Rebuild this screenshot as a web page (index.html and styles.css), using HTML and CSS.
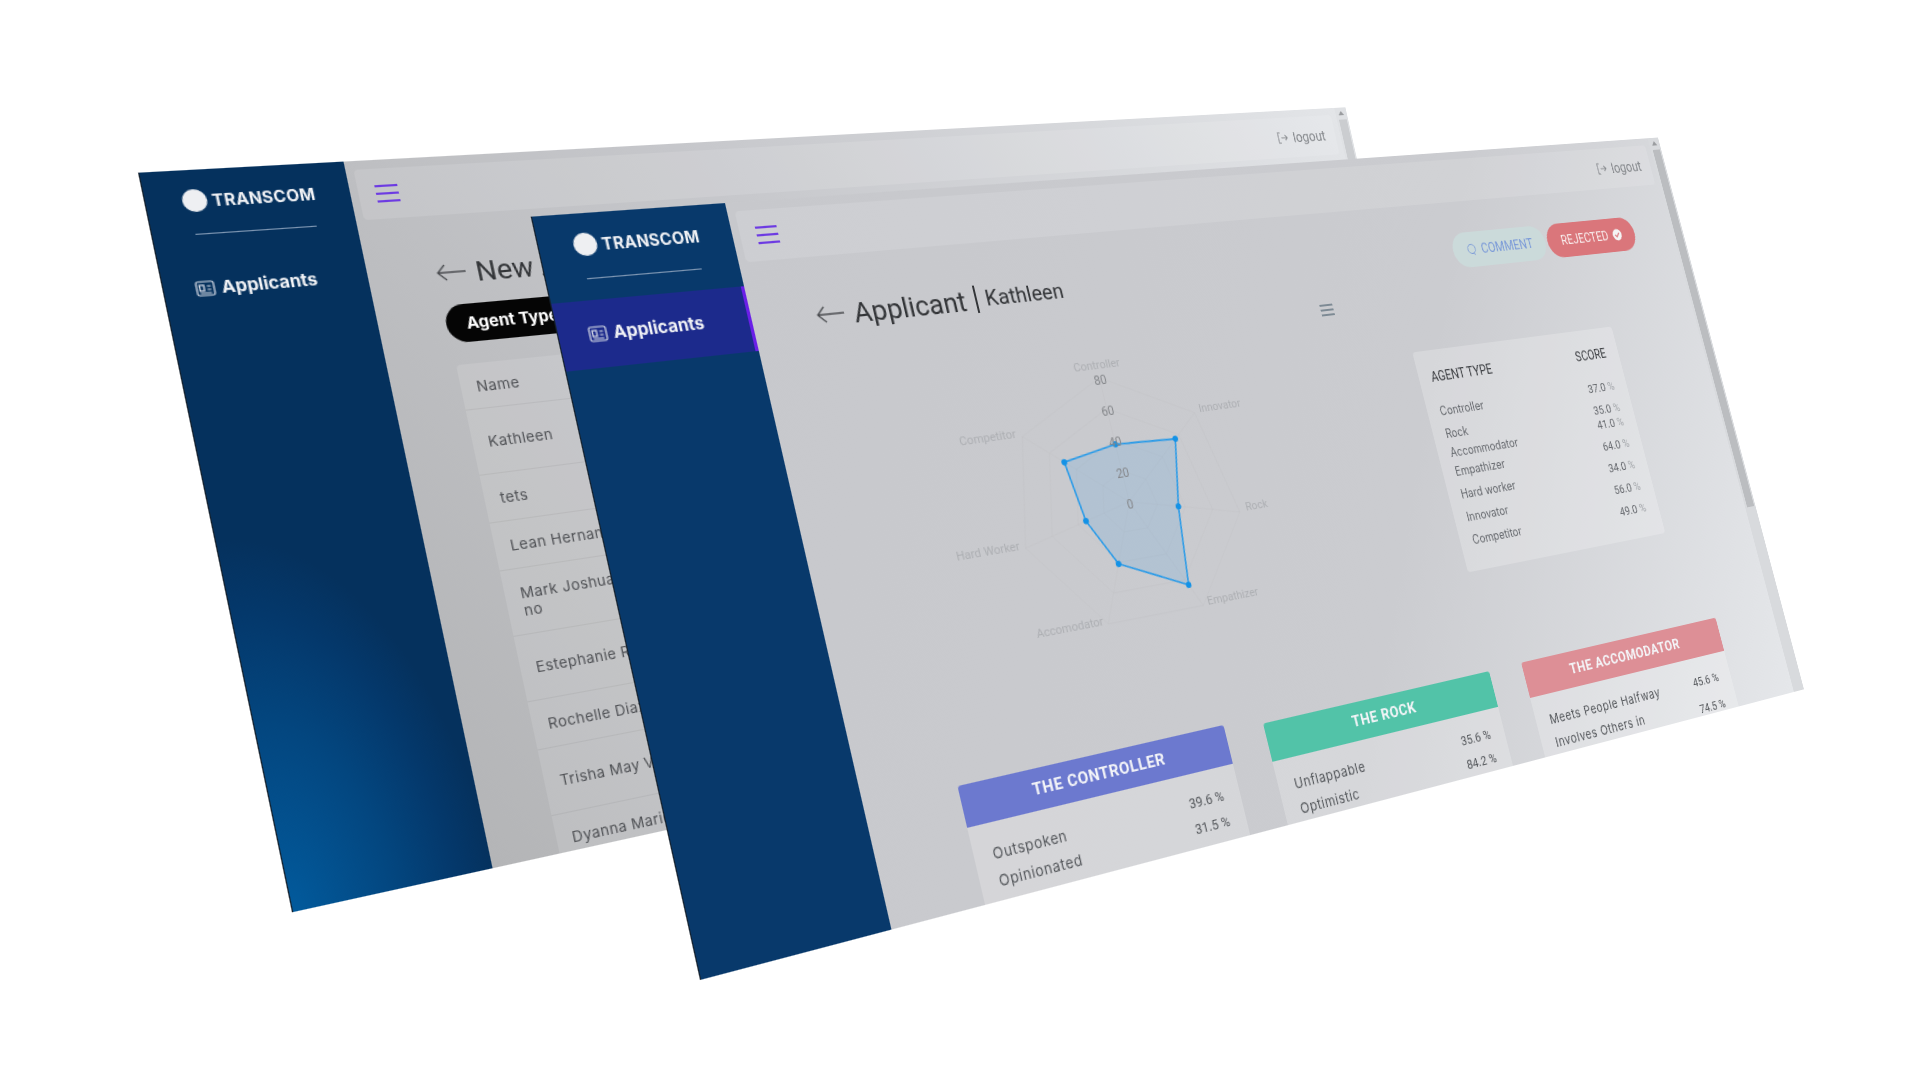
FILE: index.html
```html
<!DOCTYPE html>
<html>
<head>
    <title>Transcom Applicants</title>
    <link rel="stylesheet" href="styles.css">
</head>
<body>
    <!-- back window: applicant list -->
    <div class="window window-back">
        <aside class="sidebar sidebar-back">
            <div class="brand"><span class="brand-dot"></span><span>TRANSCOM</span></div>
            <div class="brand-line"></div>
            <a class="nav-item">
                <svg class="nav-icon" viewBox="0 0 16 14"><rect x="1" y="1" width="14" height="12" rx="1.5"/><rect x="3.5" y="4" width="3.5" height="5"/><path d="M9.5 5h3M9.5 8h3M3.5 11h9"/></svg>
                <span>Applicants</span>
            </a>
        </aside>
        <main class="main main-back">
            <div class="topbar">
                <div class="burger"><i></i><i></i><i></i></div>
                <div class="logout">
                    <svg viewBox="0 0 16 14"><path d="M5 1H2v12h3M6 7h8M11 4l3 3-3 3"/></svg>
                    <span>logout</span>
                </div>
            </div>
            <div class="page-head">
                <svg class="back-arrow" viewBox="0 0 28 16"><path d="M27 8H2M9 1 2 8l7 7"/></svg>
                <h1>New Applicants</h1>
            </div>
            <div class="pill">Agent Type</div>
            <div class="name-list">
                <div class="name-row name-head">Name</div>
                <div class="name-row tall">Kathleen</div>
                <div class="name-row">tets</div>
                <div class="name-row">Lean Hernandez</div>
                <div class="name-row tall">Mark Joshua Maria<br>no</div>
                <div class="name-row tall">Estephanie Reyes</div>
                <div class="name-row">Rochelle Diaz</div>
                <div class="name-row tall">Trisha May V.</div>
                <div class="name-row">Dyanna Marie</div>
            </div>
        </main>
        <div class="scrollbar"><b></b><i></i></div>
    </div>

    <!-- front window: applicant detail -->
    <div class="window window-front">
        <aside class="sidebar">
            <div class="brand"><span class="brand-dot"></span><span>TRANSCOM</span></div>
            <div class="brand-line"></div>
            <a class="nav-item active">
                <svg class="nav-icon" viewBox="0 0 16 14"><rect x="1" y="1" width="14" height="12" rx="1.5"/><rect x="3.5" y="4" width="3.5" height="5"/><path d="M9.5 5h3M9.5 8h3M3.5 11h9"/></svg>
                <span>Applicants</span>
            </a>
        </aside>
        <main class="main main-front">
            <div class="topbar">
                <div class="burger"><i></i><i></i><i></i></div>
                <div class="logout">
                    <svg viewBox="0 0 16 14"><path d="M5 1H2v12h3M6 7h8M11 4l3 3-3 3"/></svg>
                    <span>logout</span>
                </div>
            </div>
            <div class="page-head">
                <svg class="back-arrow" viewBox="0 0 28 16"><path d="M27 8H2M9 1 2 8l7 7"/></svg>
                <h1>Applicant</h1>
                <span class="title-sep"></span>
                <span class="title-name">Kathleen</span>
                <div class="actions">
                    <button class="btn btn-comment">
                        <svg viewBox="0 0 14 14"><circle cx="7" cy="6.5" r="5"/><path d="M8 11l3 2"/></svg>
                        COMMENT
                    </button>
                    <button class="btn btn-rejected">
                        REJECTED
                        <svg viewBox="0 0 14 14"><circle class="tick-bg" cx="7" cy="7" r="6.5"/><path class="tick" d="M4 7l2.2 2.2L10 5"/></svg>
                    </button>
                </div>
            </div>
            <div class="insight">
                <div class="chart">
                    <div class="chart-menu"><i></i><i></i><i></i></div>
                    <svg class="radar" viewBox="0 0 528 306">
                        <g transform="translate(3.5 -2.5)">
                            <g class="radar-grid">
                                <polygon points="232,62 325.8,107.2 349,208.7 284.1,290.1 179.9,290.1 115,208.7 138.2,107.2"/>
                                <polygon points="232,92 302.4,125.9 319.7,202 271,263.1 193,263.1 144.3,202 161.6,125.9"/>
                                <polygon points="232,122 278.9,144.6 290.5,195.4 258,236.1 206,236.1 173.5,195.4 185.1,144.6"/>
                                <polygon points="232,152 255.5,163.3 261.2,188.7 245,209 219,209 202.8,188.7 208.5,163.3"/>
                                <path d="M232 182V62M232 182 325.8 107.2M232 182 349 208.7M232 182 284.1 290.1M232 182 179.9 290.1M232 182 115 208.7M232 182 138.2 107.2"/>
                            </g>
                            <polygon class="radar-area" points="232,126.5 297.7,129.6 283.2,193.7 273.7,268.5 205.3,237.4 182.3,193.3 174.5,136.2"/>
                            <g class="radar-dots">
                                <circle cx="232" cy="126.5" r="3"/><circle cx="297.7" cy="129.6" r="3"/><circle cx="283.2" cy="193.7" r="3"/><circle cx="273.7" cy="268.5" r="3"/><circle cx="205.3" cy="237.4" r="3"/><circle cx="182.3" cy="193.3" r="3"/><circle cx="174.5" cy="136.2" r="3"/>
                            </g>
                        </g>
                        <g class="radar-scale">
                            <text x="236" y="66">80</text><text x="236" y="96">60</text><text x="236" y="126">40</text><text x="236" y="156">20</text><text x="236" y="186">0</text>
                        </g>
                        <g class="radar-labels">
                            <text x="236" y="51">Controller</text>
                            <text x="359" y="105">Innovator</text>
                            <text x="373" y="206">Rock</text>
                            <text x="322" y="288">Empathizer</text>
                            <text x="144" y="288">Accomodator</text>
                            <text x="81" y="207">Hard Worker</text>
                            <text x="107" y="105">Competitor</text>
                        </g>
                    </svg>
                </div>
                <div class="score-card">
                    <div class="score-head"><span>AGENT TYPE</span><span>SCORE</span></div>
                    <div class="score-row"><span>Controller</span><span>37.0 <em>%</em></span></div>
                    <div class="score-row"><span>Rock</span><span>35.0 <em>%</em></span></div>
                    <div class="score-row tight"><span>Accommodator</span><span>41.0 <em>%</em></span></div>
                    <div class="score-row"><span>Empathizer</span><span>64.0 <em>%</em></span></div>
                    <div class="score-row"><span>Hard worker</span><span>34.0 <em>%</em></span></div>
                    <div class="score-row"><span>Innovator</span><span>56.0 <em>%</em></span></div>
                    <div class="score-row"><span>Competitor</span><span>49.0 <em>%</em></span></div>
                </div>
            </div>
            <div class="types">
                <div class="type-card">
                    <div class="type-title controller">THE CONTROLLER</div>
                    <div class="trait"><span>Outspoken</span><span>39.6 %</span></div>
                    <div class="trait"><span>Opinionated</span><span>31.5 %</span></div>
                </div>
                <div class="type-card">
                    <div class="type-title rock">THE ROCK</div>
                    <div class="trait"><span>Unflappable</span><span>35.6 %</span></div>
                    <div class="trait"><span>Optimistic</span><span>84.2 %</span></div>
                </div>
                <div class="type-card">
                    <div class="type-title accomodator">THE ACCOMODATOR</div>
                    <div class="trait"><span>Meets People Halfway</span><span>45.6 %</span></div>
                    <div class="trait trait-wrapped"><span>Involves Others in<br>Decisions</span><span>74.5 %</span></div>
                </div>
            </div>
        </main>
        <div class="scrollbar"><b></b><i></i></div>
    </div>
</body>
</html>
```

FILE: styles.css
```css
html, body {
    margin: 0;
    height: 100%;
    background-color: #ffffff;
    overflow: hidden;
}

body {
    font-family: Roboto, "Liberation Sans", sans-serif;
    position: relative;
}

/* the two windows are flat 1280x640 pages set on the canvas by a perspective matrix */
.window {
    position: absolute;
    left: 0;
    top: 0;
    width: 1280px;
    height: 640px;
    display: flex;
    overflow: hidden;
    transform-origin: 0 0;
    filter: blur(0.35px);
}

.window-back {
    transform: matrix3d(1.309375, -0.021898, 0, 0.00027211, 0.236234, 1.141922, 0, -0.00001502, 0, 0, 1, 0, 138, 172.7, 0, 1);
}

.window-front {
    transform: matrix3d(1.358281, -0.022266, 0, 0.00028806, 0.234281, 1.150313, 0, -0.00004321, 0, 0, 1, 0, 530.7, 216.7, 0, 1);
}

/* sidebar */
.sidebar {
    width: 169px;
    flex: none;
    box-sizing: border-box;
    padding-top: 17px;
    background-color: #08396b;
    border-left: 1px solid #14202c;
    color: #f2f3f6;
}

.sidebar-back {
    background: radial-gradient(ellipse 170px 320px at 0% 100%, #025a9c 0%, #03467f 50%, #04386b 80%, #05315d 100%) #05315d;
}

.brand {
    display: flex;
    align-items: center;
    gap: 4px;
    height: 20px;
    padding-left: 29px;
    font-family: Inter, sans-serif;
    font-size: 14px;
    font-weight: 700;
    letter-spacing: 0.3px;
}

.brand-dot {
    width: 20px;
    height: 20px;
    border-radius: 50%;
    background-color: #eeeff2;
}

.brand-line {
    width: 100px;
    height: 1px;
    margin: 19px 0 18px 34px;
    background-color: #7f97b3;
}

.nav-item {
    display: flex;
    align-items: center;
    gap: 5px;
    height: 58px;
    padding-left: 25px;
    font-family: Inter, sans-serif;
    font-size: 15px;
    font-weight: 700;
}

.nav-item span {
    margin-top: -1px;
}

.nav-item.active {
    background-color: #1c2a8c;
    box-shadow: inset -3px 0 0 #6a1fe8;
}

.nav-icon {
    width: 16px;
    height: 14px;
    fill: none;
    stroke: #d6dbe6;
    stroke-width: 1.2;
}

/* main area */
.main {
    flex: 1;
    min-width: 0;
}

.main-front {
    background: linear-gradient(118deg, #c7c8cc 0%, #cbccd0 58%, #e5e7ea 100%);
}

.main-back {
    background: linear-gradient(62deg, #b4b5b7 0%, #c6c7cb 45%, #e3e5e8 100%);
}

.topbar {
    display: flex;
    justify-content: space-between;
    align-items: center;
    height: 46px;
    margin: 8px 7px 0;
    padding: 0 14px 0 15px;
    border-radius: 4px;
    background-color: rgba(255, 255, 255, 0.12);
}

.burger i {
    display: block;
    width: 20px;
    height: 1.5px;
    margin: 5.5px 0;
    background-color: #6d3be2;
}

.logout {
    display: flex;
    align-items: center;
    gap: 6px;
    font-size: 16px;
    color: #85888c;
}

.logout svg {
    width: 16px;
    height: 14px;
    fill: none;
    stroke: #85888c;
    stroke-width: 1.1;
}

.page-head {
    display: flex;
    align-items: center;
    height: 38px;
    margin-top: 34px;
    padding-left: 59px;
    color: #333538;
}

.back-arrow {
    width: 28px;
    height: 16px;
    margin-right: 8px;
    fill: none;
    stroke: #4c4e52;
    stroke-width: 1.3;
}

h1 {
    margin: 0;
    font-size: 26.5px;
    font-weight: 400;
    white-space: nowrap;
}

.title-sep {
    width: 2px;
    height: 26px;
    margin: 0 9px;
    background-color: #333538;
}

.title-name {
    font-size: 21px;
}

.actions {
    display: flex;
    gap: 3px;
    margin-left: auto;
    margin-right: 57px;
}

.btn {
    display: flex;
    align-items: center;
    justify-content: center;
    gap: 6px;
    width: 128px;
    height: 38px;
    border: 0;
    border-radius: 19px;
    font-family: Roboto, sans-serif;
    font-size: 14.5px;
    white-space: nowrap;
}

.btn svg {
    width: 14px;
    height: 14px;
    flex: none;
    fill: none;
}

.btn-comment {
    background-color: #cbdada;
    color: #7b9ad8;
}

.btn-comment svg {
    stroke: #7b9ad8;
}

.btn-rejected {
    background-color: #da767b;
    color: #f8ecec;
}

.tick-bg {
    fill: #f4f4f4;
}

.tick {
    stroke: #da767b;
    stroke-width: 1.5;
}

/* radar and score table */
.insight {
    display: flex;
    margin: 8px 0 0 89px;
}

.chart {
    position: relative;
    width: 528px;
    height: 306px;
    flex: none;
}

.radar {
    display: block;
    width: 528px;
    height: 306px;
}

.chart-menu {
    position: absolute;
    right: 8px;
    top: 14px;
    width: 16px;
}

.chart-menu i {
    display: block;
    height: 2px;
    margin-bottom: 3px;
    background-color: #7d8a94;
}

.radar-grid polygon, .radar-grid path {
    fill: none;
    stroke: #bfc1c4;
    stroke-width: 1;
    opacity: 0.35;
}

.radar-area {
    fill: rgba(40, 150, 232, 0.14);
    stroke: #2a9be8;
    stroke-width: 1.7;
}

.radar-dots circle {
    fill: #1492e6;
}

.radar-scale text {
    font-size: 12px;
    fill: #85878b;
    text-anchor: middle;
}

.radar-labels text {
    font-size: 11.5px;
    fill: #adafb3;
    text-anchor: middle;
}

.score-card {
    width: 276px;
    height: 232px;
    box-sizing: border-box;
    margin: 74px 0 0 76px;
    padding: 18px 16px 0;
    border-radius: 4px;
    background-color: rgba(255, 255, 255, 0.22);
}

.score-head, .score-row {
    display: flex;
    justify-content: space-between;
    align-items: center;
    padding-right: 2px;
}

.score-head {
    height: 20px;
    margin-bottom: 14px;
    font-size: 14px;
    font-weight: 400;
    color: #3e4044;
}

.score-row {
    height: 24px;
    font-family: Inter, sans-serif;
    font-size: 12.5px;
    color: #66696e;
}

.score-row.tight {
    height: 16px;
}

.score-row.tight span:last-child {
    margin-top: -8px;
}

.score-row span:last-child {
    font-family: Roboto, sans-serif;
    font-size: 13px;
}

.score-row em {
    font-style: normal;
    color: #a5a8ac;
}

/* type cards */
.types {
    display: flex;
    align-items: flex-start;
    gap: 43px;
    margin: 102px 0 0 89px;
}

.type-card {
    width: 278px;
    min-height: 130px;
    flex: none;
    border-radius: 3px 3px 0 0;
    background-color: rgba(255, 255, 255, 0.22);
}

.type-title {
    height: 37px;
    margin-bottom: 13px;
    line-height: 37px;
    text-align: center;
    border-radius: 3px 3px 0 0;
    font-size: 15.5px;
    font-weight: 700;
    letter-spacing: 0.6px;
    color: #f4f5f8;
}

.type-card:first-child {
    margin-top: -7px;
}

.type-card:last-child {
    margin-top: -1px;
}

.type-card:first-child .type-title {
    margin-bottom: 15px;
}

.type-card:last-child .type-title {
    margin-bottom: 14px;
}

.controller {
    background-color: #6c79cf;
}

.rock {
    background-color: #52c3a8;
}

.accomodator {
    background-color: #dd8f96;
}

.trait {
    display: flex;
    justify-content: space-between;
    align-items: flex-start;
    padding: 0 18px;
    line-height: 24px;
    font-family: Inter, sans-serif;
    font-size: 13.5px;
    letter-spacing: 0.6px;
    color: #55585c;
}

.trait span:last-child {
    font-family: Roboto, sans-serif;
    font-size: 13px;
    letter-spacing: 0;
}

.trait-wrapped span:last-child {
    margin-top: 5px;
}

/* pill and list of the back window */
.pill {
    width: 132px;
    height: 35px;
    box-sizing: border-box;
    margin: 11px 0 0 59px;
    padding-left: 18px;
    line-height: 35px;
    border-radius: 18px;
    background-color: #050505;
    color: #ffffff;
    font-family: Inter, sans-serif;
    font-size: 15px;
    font-weight: 700;
    white-space: nowrap;
}

.name-list {
    width: 420px;
    margin: 20px 0 0 60px;
    border-radius: 4px;
    background-color: rgba(255, 255, 255, 0.12);
    font-family: Inter, sans-serif;
    font-size: 13.5px;
    letter-spacing: 0.4px;
    color: #505256;
}

.name-row {
    display: flex;
    flex-direction: column;
    justify-content: center;
    min-height: 44px;
    box-sizing: border-box;
    padding-left: 14px;
    border-bottom: 1px solid rgba(0, 0, 0, 0.05);
}

.name-row.tall {
    min-height: 60px;
}

.name-head {
    min-height: 42px;
}

/* scrollbar down the right edge */
.scrollbar {
    position: relative;
    width: 16px;
    flex: none;
    background-color: rgba(255, 255, 255, 0.1);
}

.main-front + .scrollbar {
    background-color: #d8dadd;
}

.scrollbar b {
    position: absolute;
    left: 4px;
    top: 4px;
    border: 4px solid transparent;
    border-top: 0;
    border-bottom: 5px solid #9a9c9f;
}

.scrollbar i {
    display: block;
    margin: 14px 2px 0 3px;
    height: 416px;
    background-color: #bbbdc0;
}

.main-back + .scrollbar i {
    background-color: #cbcdd0;
}

.main-back + .scrollbar {
    background-color: #dfe1e4;
}
```
